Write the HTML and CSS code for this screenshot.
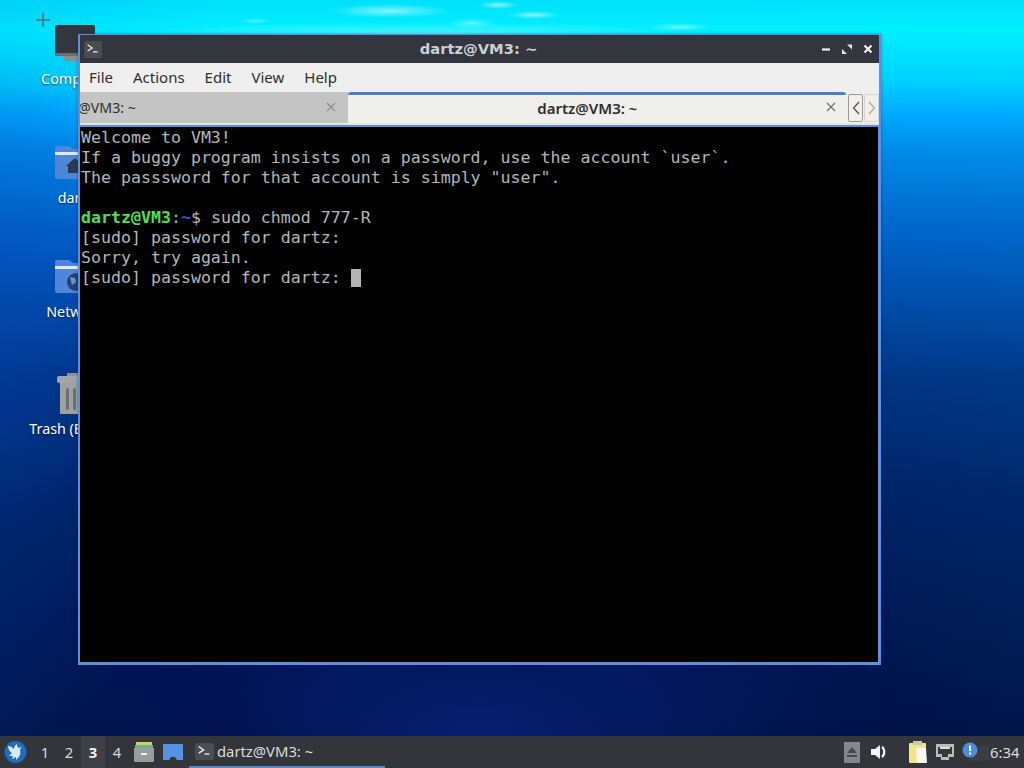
FILE: index.html
```html
<!DOCTYPE html>
<html lang="en">
<head>
<meta charset="utf-8">
<title>dartz@VM3: ~</title>
<link rel="stylesheet" href="styles.css">
</head>
<body>
<div class="desktop">
  <svg class="plus" width="16" height="16" viewBox="0 0 16 16"><path d="M8 1v14M1 8h14" stroke="#55707f" stroke-width="1.6" fill="none"/></svg>

  <div class="dicon dicon-computer">
    <svg width="44" height="40" viewBox="0 0 44 40"><rect x="2" y="1" width="40" height="30" rx="2" fill="#33363d"/><rect x="2" y="29" width="40" height="3" fill="#6b6f72"/><path d="M10 32h24l3 5H12z" fill="#8c9088"/></svg>
    <span class="dlabel">Computer</span>
  </div>
  <div class="dicon dicon-home">
    <svg width="44" height="40" viewBox="0 0 44 40"><path d="M2 5a2 2 0 0 1 2-2h12l4 3h20a2 2 0 0 1 2 2v26a2 2 0 0 1-2 2H4a2 2 0 0 1-2-2z" fill="#4f86dc"/><rect x="2" y="9" width="40" height="3" fill="#dfe8f5"/><path d="M13 23l9-8 9 8h-2v7H15v-7z" fill="#2c3a50"/></svg>
    <span class="dlabel">dartz</span>
  </div>
  <div class="dicon dicon-network">
    <svg width="44" height="40" viewBox="0 0 44 40"><path d="M2 5a2 2 0 0 1 2-2h12l4 3h20a2 2 0 0 1 2 2v26a2 2 0 0 1-2 2H4a2 2 0 0 1-2-2z" fill="#4f86dc"/><rect x="2" y="9" width="40" height="3" fill="#dfe8f5"/><circle cx="23" cy="25" r="9" fill="#24406b"/><path d="M17 20l5 1 1 4-4 3z" fill="#6d93c7"/></svg>
    <span class="dlabel">Network</span>
  </div>
  <div class="dicon dicon-trash">
    <svg width="44" height="46" viewBox="0 0 44 46"><rect x="14" y="0" width="16" height="5" fill="#8f9091"/><rect x="4" y="3" width="36" height="7" rx="2" fill="#a3a4a5"/><path d="M7 10h30v31H7z" fill="#a0a1a2"/><rect x="13" y="15" width="3" height="22" rx="1.500" fill="#6e6f70"/><rect x="20" y="15" width="3" height="22" rx="1.500" fill="#6e6f70"/></svg>
    <span class="dlabel">Trash (Empty)</span>
  </div>

  <div class="window">
    <div class="titlebar">
      <span class="term-badge">
        <svg width="18" height="16" viewBox="0 0 18 16"><path d="M2 2l6 4-6 4" stroke="#e8e8e8" stroke-width="1.6" fill="none"/><path d="M9 11h6" stroke="#e8e8e8" stroke-width="1.6"/></svg>
      </span>
      <span class="title">dartz@VM3: ~</span>
      <span class="wm-buttons">
        <svg width="14" height="14" viewBox="0 0 14 14"><path d="M3 7.500h8" stroke="#f2f2f2" stroke-width="2.200"/></svg>
        <svg width="14" height="14" viewBox="0 0 14 14"><path d="M7 2.500h5v5zM7 12H2V7z" fill="#e6e6e6"/></svg>
        <svg width="14" height="14" viewBox="0 0 14 14"><path d="M3.500 3.500l7 7M10.500 3.500l-7 7" stroke="#f2f2f2" stroke-width="2.200"/></svg>
      </span>
    </div>
    <nav class="menubar">
      <span>File</span><span>Actions</span><span>Edit</span><span>View</span><span>Help</span>
    </nav>
    <div class="tabbar">
      <div class="tab tab-inactive">
        <span class="tab-clip">@VM3: ~</span>
        <svg class="tab-close" width="12" height="12" viewBox="0 0 12 12"><path d="M2 2l8 8M10 2l-8 8" stroke="#8b8b8b" stroke-width="1.1"/></svg>
      </div>
      <div class="tab tab-active">
        <span class="tab-text">dartz@VM3: ~</span>
        <svg class="tab-close" width="12" height="12" viewBox="0 0 12 12"><path d="M2 2l8 8M10 2l-8 8" stroke="#6e6e6e" stroke-width="1.1"/></svg>
      </div>
      <div class="tab-arrow tab-arrow-on"><svg width="8" height="14" viewBox="0 0 8 14"><path d="M7 1L1.5 7 7 13" stroke="#4a4a4a" stroke-width="1.2" fill="none"/></svg></div>
      <div class="tab-arrow"><svg width="8" height="14" viewBox="0 0 8 14"><path d="M1 1l5.500 6L1 13" stroke="#a9a9a9" stroke-width="1.200" fill="none"/></svg></div>
    </div>
    <pre class="terminal">Welcome to VM3!
If a buggy program insists on a password, use the account `user`.
The passsword for that account is simply "user".

<b class="prompt-user">dartz@VM3</b>:<b class="prompt-path">~</b>$ sudo chmod 777-R
[sudo] password for dartz: 
Sorry, try again.
[sudo] password for dartz: <span class="cursor"> </span></pre>
  </div>
</div>

<footer class="panel">
  <svg class="logo" width="23" height="24" viewBox="0 0 23 24"><circle cx="11.500" cy="12" r="11" fill="#1c6cc0"/><path d="M4 6c2 0 4 1 6 3 0-2 1-4 3-5 0 2 1 3 1 4l4-1c-1 1-2 2-2 3 1 3 0 6-2 8l-2 2 0-3-4 2 1-3-4 0 3-3C6 12 4 9 4 6z" fill="#d9e9f7"/></svg>
  <div class="pager">
    <span>1</span><span>2</span><span class="pager-on">3</span><span>4</span>
  </div>
  <svg class="launch" width="22" height="22" viewBox="0 0 22 22"><rect x="3" y="1" width="16" height="3" fill="#e4c84e"/><rect x="2" y="4" width="18" height="3" fill="#5fb4a8"/><path d="M1 7h20v13a1 1 0 0 1-1 1H2a1 1 0 0 1-1-1z" fill="#9b9b98"/><rect x="8" y="12" width="6" height="2" fill="#f1f1f1"/></svg>
  <svg class="launch" width="22" height="18" viewBox="0 0 22 18"><path d="M1 1h20v16h-6l-2-3H9l-2 3H1z" fill="#5592e6"/></svg>
  <div class="task">
    <span class="task-badge"><svg width="18" height="16" viewBox="0 0 18 16"><path d="M2 2l6 4-6 4" stroke="#eee" stroke-width="1.600" fill="none"/><path d="M9 11h6" stroke="#eee" stroke-width="1.600"/></svg></span>
    <span>dartz@VM3: ~</span>
  </div>
  <div class="tray">
    <span class="eject"><svg width="14" height="14" viewBox="0 0 14 14"><path d="M7 2l5 6H2zM2 10h10v2H2z" fill="#474a4c"/></svg></span>
    <svg class="sound" width="20" height="18" viewBox="0 0 20 18"><path d="M1 6h4l5-4v14l-5-4H1z" fill="#f4f4f4"/><path d="M12 4c3 2 3 8 0 10" stroke="#f4f4f4" stroke-width="2.200" fill="none"/></svg>
    <svg class="clip" width="20" height="24" viewBox="0 0 20 24"><rect x="1" y="3" width="17" height="20" rx="1" fill="#f0e68c"/><rect x="5" y="1" width="9" height="4" fill="#c9c9b0"/><path d="M8 8h10l1 15H9z" fill="#f7f7f4"/></svg>
    <svg class="net" width="20" height="20" viewBox="0 0 20 20"><path d="M1 2h18v13h-5v3H6v-3H1z" fill="#bcbcbc"/><path d="M3 5h14v7h-4v3H7v-3H3z" fill="#34373c"/><path d="M5 5h10v2H5z" fill="#e0e0d0"/></svg>
    <span class="notice"><svg width="28" height="20" viewBox="0 0 28 20"><rect x="7" y="4" width="20" height="15" fill="#3a3d42"/><circle cx="8" cy="8" r="7.500" fill="#4a8fdb"/><path d="M8 3.500v5.500M8 10.500v2" stroke="#fff" stroke-width="2"/></svg></span>
    <span class="clock">6:34</span>
  </div>
</footer>
</body>
</html>
```
FILE: styles.css
```css
* { box-sizing: border-box; }
html, body { margin: 0; height: 100%; }
body {
  width: 1024px;
  height: 768px;
  overflow: hidden;
  display: flex;
  flex-direction: column;
  font-family: "Noto Sans", "Open Sans", sans-serif;
}
.desktop {
  position: relative;
  flex: 1;
  overflow: hidden;
  background:
    radial-gradient(ellipse 60px 7px at 390px 11px, rgba(255, 255, 255, .5), transparent),
    radial-gradient(ellipse 20px 4px at 498px 5px, rgba(255, 255, 255, .55), transparent),
    radial-gradient(ellipse 26px 4px at 534px 15px, rgba(255, 255, 255, .55), transparent),
    radial-gradient(ellipse 24px 5px at 472px 23px, rgba(255, 255, 255, .35), transparent),
    radial-gradient(ellipse 32px 4px at 680px 27px, rgba(255, 255, 255, .4), transparent),
    radial-gradient(ellipse 16px 3px at 255px 21px, rgba(255, 255, 255, .3), transparent),
    radial-gradient(ellipse 300px 12px at 420px 34px, rgba(255, 255, 255, .3), transparent),
    radial-gradient(ellipse 420px 170px at 480px 736px, rgba(10, 50, 150, .55), transparent),
    radial-gradient(ellipse 130px 250px at 0px 300px, rgba(10, 60, 170, .3), transparent),
    linear-gradient(90deg, rgba(0, 120, 220, .14), transparent 22%, transparent 60%, rgba(0, 255, 255, .05)),
    linear-gradient(180deg, #00e0fb 0px, #00f0ff 30px, #00d0ff 80px, #00a8ff 113px, #0088e8 150px, #0060c8 230px, #0048a8 300px, #002e80 380px, #001c60 500px, #00104c 640px, #000a40 736px);
}
.plus { position: absolute; left: 35px; top: 12px; }

.dicon { position: absolute; width: 100px; display: flex; flex-direction: column; align-items: center; }
.dlabel { margin-top: 5px; color: #fff; font-size: 14.300px; line-height: 20px; text-shadow: 0 1px 2px rgba(0, 0, 40, .6); white-space: nowrap; }
.dicon-computer { left: 25px; top: 24px; }
.dicon-home { left: 25px; top: 143px; }
.dicon-network { left: 25px; top: 257px; }
.dicon-trash { left: 25px; top: 373px; }
.dicon-trash .dlabel { margin-top: 0; }

.window {
  position: absolute;
  left: 78px;
  top: 34px;
  width: 803px;
  height: 631px;
  display: flex;
  flex-direction: column;
  padding: 1px 3px 3px 2px;
  background: #5b90de;
  box-shadow: 0 0 3px rgba(0, 20, 80, .4);
}
.titlebar {
  position: relative;
  flex: 0 0 28px;
  margin: 0 -1px 0 0;
  display: flex;
  align-items: center;
  background: #33363f;
  color: #ccd0d5;
  font-family: "DejaVu Sans", sans-serif;
  font-size: 14.700px;
  font-weight: 700;
}
.term-badge {
  margin-left: 4px;
  width: 18px;
  height: 17px;
  display: flex;
  align-items: center;
  justify-content: center;
  background: #4b4d52;
  border-radius: 2px;
}
.term-badge svg { width: 14px; height: 13px; }
.title { position: absolute; left: 0; right: 2px; text-align: center; line-height: 26px; }
.wm-buttons { position: relative; margin-left: auto; margin-right: 4px; display: flex; gap: 7px; }
.menubar {
  flex: 0 0 29px;
  display: flex;
  align-items: center;
  gap: 20px;
  padding: 0 0 2px 9px;
  background: #efefef;
  color: #2e2e2e;
  font-size: 15px;
  margin-right: -1px;
}
.tabbar {
  flex: 0 0 33px;
  margin-right: -1px;
  display: flex;
  align-items: stretch;
  background: #efefef;
  border-bottom: 2px solid #dfe6ef;
  font-size: 14px;
  color: #2e2e2e;
}
.tab { position: relative; display: flex; align-items: center; }
.tab-close { position: absolute; top: 9px; right: 11px; }
.tab-inactive {
  width: 268px;
  background: #c4c4c4;
  overflow: hidden;
  font-size: 14.200px;
}
.tab-clip { white-space: nowrap; margin-left: -2px; }
.tab-active {
  width: 499px;
  background: #f0efec;
  border-top: 3px solid #4b7fc9;
  border-radius: 3px 3px 0 0;
  justify-content: center;
  font-size: 15px;
  font-weight: 600;
  padding-bottom: 3px;
}
.tab-active .tab-close { top: 6px; right: 9px; }
.tab-text { margin-right: 19px; }
.tab-arrow {
  width: 15px;
  margin: 2px 0 1px 1px;
  border: 1px solid #d8d6d0;
  border-radius: 2px;
  display: flex;
  align-items: center;
  justify-content: center;
  background: #f0efec;
}
.tab-arrow-on { border-color: #9a9a9a; margin-left: 2px; }
.terminal {
  flex: 1;
  margin: 2px 0 0;
  padding: 1px 0 0 1px;
  background: #000;
  color: #b5b5b5;
  font-family: "DejaVu Sans Mono", monospace;
  font-size: 16.600px;
  line-height: 20px;
  overflow: hidden;
}
.prompt-user { color: #4fe04f; font-weight: 700; }
.prompt-path { color: #4a4ae8; font-weight: 700; }
.cursor { display: inline-block; width: 10px; height: 18px; background: #b5b5b5; vertical-align: -1px; }

.panel {
  flex: 0 0 32px;
  display: flex;
  align-items: center;
  background: #33353b;
  color: #dcdcdc;
  font-size: 14.800px;
}
.logo { margin-left: 4px; flex: none; }
.pager { display: flex; margin-left: 6px; }
.pager span { width: 24px; height: 32px; display: flex; align-items: center; justify-content: center; }
.pager .pager-on { background: #3d4047; font-weight: 700; color: #f0f0f0; }
.launch { flex: none; margin-left: 7px; }
.pager + .launch { margin-left: 4px; }
.task {
  margin-left: 5px;
  width: 196px;
  height: 32px;
  display: flex;
  align-items: center;
  gap: 3px;
  padding-left: 6px;
  border-bottom: 2px solid #4f8bd0;
}
.task-badge {
  width: 19px;
  height: 17px;
  display: flex;
  align-items: center;
  justify-content: center;
  background: #4b4d52;
  border-radius: 2px;
}
.task-badge svg { width: 15px; height: 13px; }
.tray { margin-left: auto; display: flex; align-items: center; }
.eject { width: 16px; height: 21px; display: flex; align-items: center; justify-content: center; background: #85878a; }
.sound { margin-left: 10px; }
.clip { margin-left: 18px; }
.net { margin-left: 7px; }
.notice { margin-left: 7px; display: flex; }
.clock { margin-right: 5px; width: 29px; }
```
